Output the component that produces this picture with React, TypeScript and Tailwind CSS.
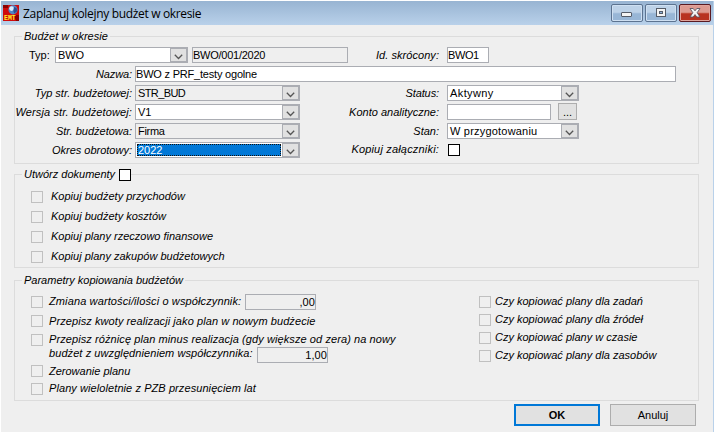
import React from 'react';
import clsx from 'clsx';

const Chevron = () => (
  <svg width="9" height="6" viewBox="0 0 9 6" className="mt-1" fill="none" stroke="#555" strokeWidth="1.3">
    <path d="M.8 .8 L4.5 4.5 L8.2 .8" />
  </svg>
);

const Label: React.FC<{ className?: string; children: React.ReactNode }> = ({ className, children }) => (
  <span className={clsx('shrink-0 text-right leading-4 italic', className)}>{children}</span>
);

const Field: React.FC<{ value?: string; disabled?: boolean; className?: string }> = ({ value, disabled, className }) => (
  <div
    className={clsx(
      'h-4 shrink-0 border border-[#abadb3] leading-[15px]',
      disabled ? 'bg-[#efefef]' : 'bg-white',
      className
    )}
  >
    {value}
  </div>
);

const Combo: React.FC<{ value: string; disabled?: boolean; selected?: boolean; className?: string }> = ({
  value,
  disabled,
  selected,
  className,
}) => (
  <div
    className={clsx(
      'flex h-4 shrink-0 border border-[#abadb3]',
      disabled ? 'bg-[#efefef]' : 'bg-white',
      className
    )}
  >
    <div className={clsx('flex-1', selected ? 'p-px' : 'pl-[2px] leading-[15px]')}>
      {selected ? (
        <div className="h-3 border border-dotted border-[#111] bg-[#0078d7] leading-[11px] text-white">{value}</div>
      ) : (
        value
      )}
    </div>
    <div className="flex w-[17px] items-center justify-center border border-[#abadb3] bg-[#e1e1e1]">
      <Chevron />
    </div>
  </div>
);

const Check: React.FC<{ enabled?: boolean; className?: string }> = ({ enabled, className }) => (
  <span
    className={clsx(
      'h-3 w-3 shrink-0 border',
      enabled ? 'border-black bg-white' : 'border-[#c0c0c0] bg-[#efefef]',
      className
    )}
  />
);

const Group: React.FC<{ title: string; extra?: React.ReactNode; className?: string; children: React.ReactNode }> = ({
  title,
  extra,
  className,
  children,
}) => (
  <section className={clsx('ml-[13px] w-[685px] border border-[#dcdcdc]', className)}>
    <div className="-mt-2 ml-[7px] flex h-[14px] w-fit items-center bg-[#efefef] px-[2px] italic">
      {title}
      {extra}
    </div>
    {children}
  </section>
);

const documents = [
  'Kopiuj budżety przychodów',
  'Kopiuj budżety kosztów',
  'Kopiuj plany rzeczowo finansowe',
  'Kopiuj plany zakupów budżetowych',
];

const planOptions = [
  'Czy kopiować plany dla zadań',
  'Czy kopiować plany dla źródeł',
  'Czy kopiować plany w czasie',
  'Czy kopiować plany dla zasobów',
];

const AppIcon = () => (
  <svg width="16" height="16" viewBox="0 0 16 16" className="shrink-0">
    <rect width="16" height="16" fill="#d00a0a" />
    <path d="M0 0h5v3H0zM11 10h5v6h-3z" fill="#8c0000" />
    <circle cx="10" cy="4.8" r="4.6" fill="#4f86c8" />
    <circle cx="8.6" cy="3.6" r="2.4" fill="#dcecfb" />
    <path d="M11 2l2.5 1 .8 3-3 2.4-1-2.4z" fill="#2b4f92" />
    <text x="1" y="15" fontSize="6.5" fontWeight="bold" fontFamily="Liberation Mono, monospace" fill="#ffee22">
      EMT
    </text>
  </svg>
);

const WindowButton: React.FC<{ close?: boolean; children: React.ReactNode }> = ({ close, children }) => (
  <div
    className={clsx(
      'flex h-[18px] w-8 items-center justify-center rounded-[2px] border',
      close
        ? 'border-[#5a1a22] bg-linear-to-b from-[#dd9a90] from-45% to-[#b83220] to-55% shadow-[inset_0_0_0_1px_#e0a49c]'
        : 'border-[#5c7390] bg-linear-to-b from-[#bdd2e8] from-45% to-[#98b6d6] to-55% shadow-[inset_0_0_0_1px_#cfe0f2]'
    )}
  >
    {children}
  </div>
);

const TitleBar = () => (
  <header className="flex h-6 items-center bg-linear-to-b from-[#98b4d2] to-[#b9d1ea] pr-[2px] pl-[2px]">
    <AppIcon />
    <h1 className="mt-px ml-1 flex-1 font-['Open_Sans',sans-serif] text-[12px] tracking-[-0.33px]">
      Zaplanuj kolejny budżet w okresie
    </h1>
    <div className="flex gap-[2px]">
      <WindowButton>
        <svg width="12" height="6" viewBox="0 0 12 6" className="mt-[3px]">
          <rect x="0.5" y="0.5" width="10" height="4" rx="0.5" fill="#f4f4f4" stroke="#555c68" />
        </svg>
      </WindowButton>
      <WindowButton>
        <svg width="12" height="10" viewBox="0 0 12 10">
          <rect x="1.5" y="0.5" width="9" height="8" fill="#f4f4f4" stroke="#555c68" />
          <rect x="4.5" y="3.5" width="3" height="2" fill="#8bb0d8" stroke="#555c68" />
        </svg>
      </WindowButton>
      <WindowButton close>
        <svg width="12" height="10" viewBox="0 0 12 10">
          <path
            d="M1 .5h3.2L6 2.8 7.8 .5H11L8.2 4.7 11 9H7.8L6 6.6 4.2 9H1L3.8 4.7z"
            fill="#f4f4f4"
            stroke="#5b5662"
            strokeWidth="0.9"
          />
        </svg>
      </WindowButton>
    </div>
  </header>
);

export default function App() {
  return (
    <div className="h-[432px] w-[715px] overflow-hidden border-x border-t border-white bg-[#efefef] font-['Liberation_Sans',Arial,sans-serif] text-[11px] leading-[14px] whitespace-nowrap text-black">
      <div className="h-full border-r border-[#b9d1ea]">
        <TitleBar />

        <Group title="Budżet w okresie" className="mt-[11px] h-[128px]">
          <div className="mt-1 flex flex-col gap-[3px]">
            <div className="flex h-4">
              <span className="w-10 pl-[14px] leading-4">Typ:</span>
              <Combo value="BWO" className="w-[133px] tracking-[-0.1px]" />
              <Field value="BWO/001/2020" disabled className="ml-1 w-[156px] tracking-[-0.25px]" />
              <Label className="w-[99px] pr-2 tracking-[0.05px]">Id. skrócony:</Label>
              <Field value="BWO1" className="w-[42px] tracking-[-0.4px]" />
            </div>
            <div className="flex h-4">
              <Label className="w-[120px] pr-[3px] tracking-[-0.1px]">Nazwa:</Label>
              <Field value="BWO z PRF_testy ogolne" className="w-[541px] tracking-[-0.2px]" />
            </div>
            <div className="flex h-4">
              <Label className="w-[120px] pr-[3px]">Typ str. budżetowej:</Label>
              <Combo value="STR_BUD" disabled className="w-[165px] tracking-[-0.6px]" />
              <Label className="w-[147px] pr-2 tracking-[-0.1px]">Status:</Label>
              <Combo value="Aktywny" className="w-[132px] tracking-[0.4px]" />
            </div>
            <div className="flex h-4">
              <Label className="w-[120px] pr-[3px] tracking-[0.12px]">Wersja str. budżetowej:</Label>
              <Combo value="V1" className="w-[165px]" />
              <Label className="w-[147px] pr-2">Konto analityczne:</Label>
              <Field className="w-[104px]" />
              <button className="-mt-px ml-[7px] h-[17px] w-[19px] border border-[#adadad] bg-[#e1e1e1] leading-[14px]">
                ...
              </button>
            </div>
            <div className="flex h-4">
              <Label className="w-[120px] pr-[3px]">Str. budżetowa:</Label>
              <Combo value="Firma" disabled className="w-[165px] tracking-[-0.3px]" />
              <Label className="w-[147px] pr-2">Stan:</Label>
              <Combo value="W przygotowaniu" className="w-[132px] tracking-[0.2px]" />
            </div>
            <div className="flex h-4">
              <Label className="w-[120px] pr-[3px]">Okres obrotowy:</Label>
              <Combo value="2022" selected className="w-[165px]" />
              <Label className="w-[147px] pr-2 leading-[15px] tracking-[0.18px]">Kopiuj załączniki:</Label>
              <Check enabled className="mt-[2px] ml-px" />
            </div>
          </div>
        </Group>

        <Group
          title="Utwórz dokumenty"
          extra={<Check enabled className="mt-[2px] ml-1 -mr-[2px]" />}
          className="mt-[10px] h-[94px]"
        >
          <div className="mt-[9px] ml-4 flex flex-col gap-[6px]">
            {documents.map((text) => (
              <div key={text} className="flex h-[14px] gap-2 leading-3 italic">
                <Check className="mt-px" />
                {text}
              </div>
            ))}
          </div>
        </Group>

        <Group title="Parametry kopiowania budżetów" className="mt-3 h-[121px]">
          <div className="mt-2 flex italic">
            <div className="ml-4 w-[448px] tracking-[0.08px]">
              <div className="flex h-5 gap-[6px]">
                <Check className="mt-px" />
                <span className="-mt-px w-[190px] tracking-[0.12px]">Zmiana wartości/ilości o współczynnik:</span>
                <Field value=",00" disabled className="-mt-px w-[71px] text-right not-italic" />
              </div>
              <div className="flex h-[19px] gap-[6px]">
                <Check />
                <span className="-mt-px">Przepisz kwoty realizacji jako plan w nowym budżecie</span>
              </div>
              <div className="flex h-8 gap-[6px]">
                <Check />
                <div className="-mt-[2px]">
                  <div className="tracking-[0.09px]">
                    Przepisz różnicę plan minus realizacja (gdy większe od zera) na nowy
                  </div>
                  <div className="flex">
                    <span className="w-[208px]">budżet z uwzględnieniem współczynnika:</span>
                    <Field value="1,00" disabled className="mt-px w-[71px] text-right not-italic" />
                  </div>
                </div>
              </div>
              <div className="flex h-[17px] gap-[6px]">
                <Check className="-mt-px" />
                <span className="-mt-[2px] tracking-normal">Zerowanie planu</span>
              </div>
              <div className="flex h-[14px] gap-[6px]">
                <Check />
                <span className="-mt-[2px]">Plany wieloletnie z PZB przesunięciem lat</span>
              </div>
            </div>
            <div className="flex flex-col gap-1">
              {planOptions.map((text) => (
                <div key={text} className="flex h-[14px] gap-1 leading-3">
                  <Check className="mt-px" />
                  {text}
                </div>
              ))}
            </div>
          </div>
        </Group>

        <footer className="mt-[3px] mr-[17px] flex justify-end gap-[10px]">
          <button className="h-[22px] w-[86px] border-2 border-[#0078d7] bg-[#e1e1e1] font-bold">OK</button>
          <button className="h-[22px] w-[86px] border border-[#adadad] bg-[#e1e1e1]">Anuluj</button>
        </footer>
      </div>
    </div>
  );
}
